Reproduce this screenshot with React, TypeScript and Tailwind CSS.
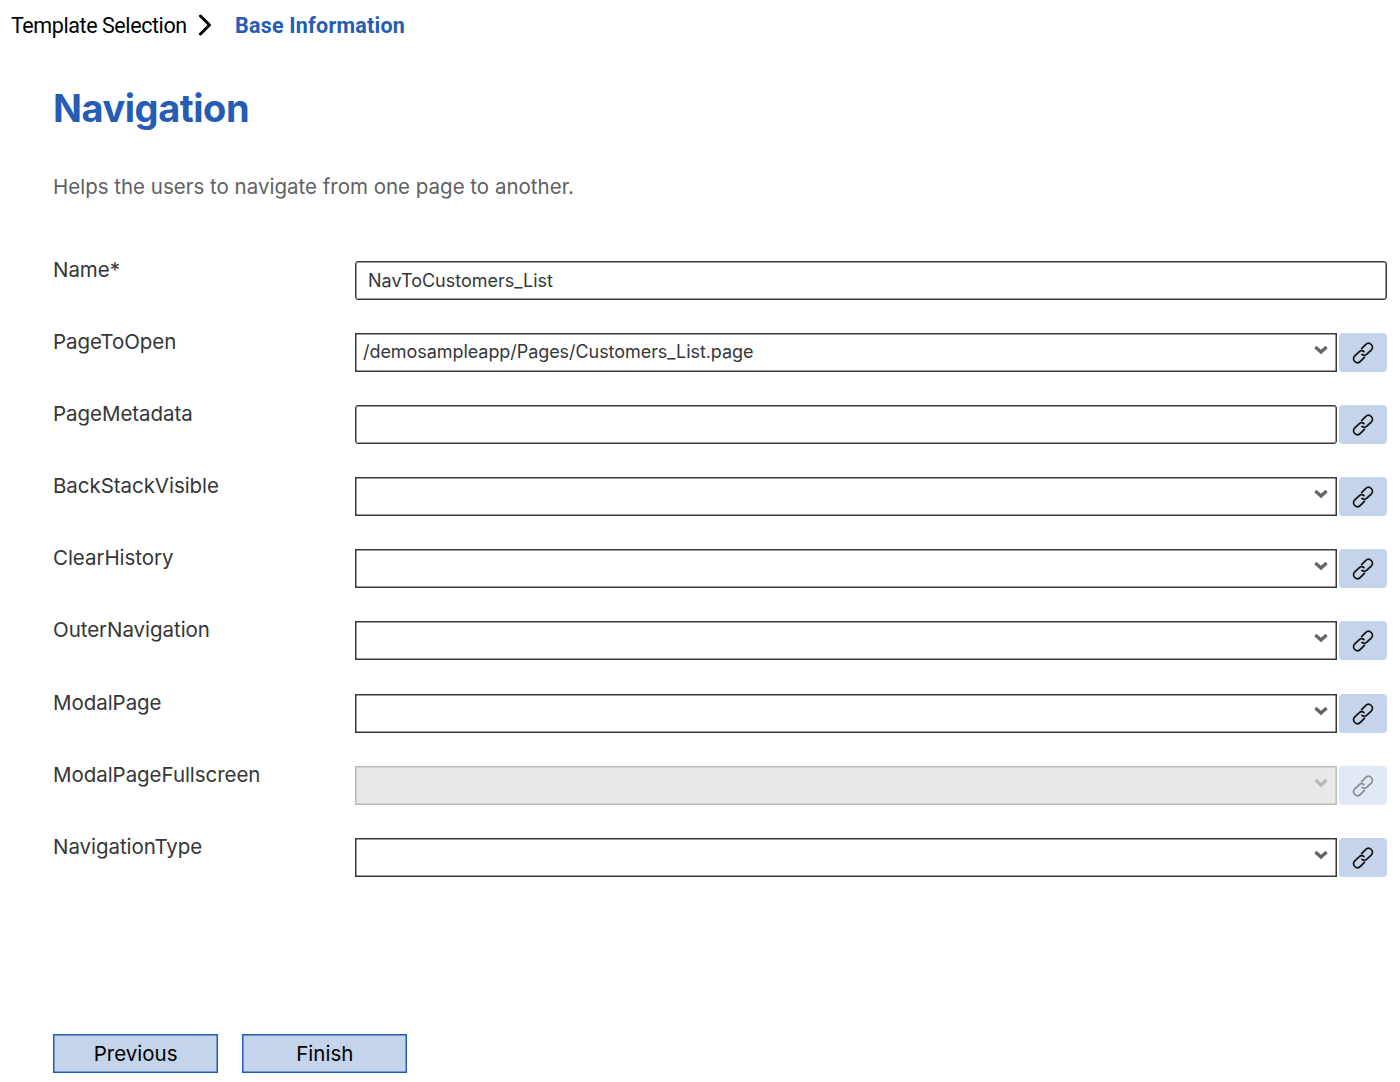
type Kind = 'input' | 'select';

interface Field {
  label: string;
  kind: Kind;
  value?: string;
  link?: boolean;
  disabled?: boolean;
}

const fields: Field[] = [
  { label: 'Name*', kind: 'input', value: 'NavToCustomers_List' },
  { label: 'PageToOpen', kind: 'select', value: '/demosampleapp/Pages/Customers_List.page', link: true },
  { label: 'PageMetadata', kind: 'input', link: true },
  { label: 'BackStackVisible', kind: 'select', link: true },
  { label: 'ClearHistory', kind: 'select', link: true },
  { label: 'OuterNavigation', kind: 'select', link: true },
  { label: 'ModalPage', kind: 'select', link: true },
  { label: 'ModalPageFullscreen', kind: 'select', link: true, disabled: true },
  { label: 'NavigationType', kind: 'select', link: true },
];

function LinkIcon() {
  return (
    <svg width="22" height="22" viewBox="0 0 22 22" fill="none" stroke="currentColor" strokeWidth="1.7" strokeLinecap="round" strokeLinejoin="round">
      <path d="M9.6 6.6 L13.6 2.6 C15.3 0.9 17.6 0.9 19.2 2.5 C20.9 4.1 20.9 6.4 19.2 8.1 L14.9 12.2 C13.4 13.6 11.4 13.6 10 12.4" />
      <path d="M12.4 15.4 L8.4 19.4 C6.7 21.1 4.4 21.1 2.8 19.5 C1.1 17.9 1.1 15.6 2.8 13.9 L7.1 9.8 C8.6 8.4 10.6 8.4 12 9.6" />
    </svg>
  );
}

function Row({ field }: { field: Field }) {
  const colors = field.disabled
    ? 'border-[#bcbcbc] bg-[#e8e8e8] shadow-[inset_0_0_0_0.5px_#bcbcbc]'
    : 'border-[#38393b] bg-white shadow-[inset_0_0_0_0.5px_#38393b]';
  const shape = field.kind === 'input' ? 'rounded-[3px] pl-3' : 'pl-[7px] pr-2 tracking-[-0.06px]';
  return (
    <div className="flex h-[72.2px] items-start">
      <label className="w-[302px] shrink-0 text-[20.5px] leading-[17px] tracking-[-0.05px] text-[#353638]">{field.label}</label>
      <div className={`flex h-[39px] min-w-0 grow items-center justify-between border text-[18px] leading-6 text-[#353638] ${colors} ${shape}`}>
        <span className={field.kind === 'input' ? 'pt-px' : ''}>{field.value}</span>
        {field.kind === 'select' && (
          <svg className={`mb-[5px] ${field.disabled ? 'text-[#b8b8b8]' : 'text-[#636363]'}`} width="14" height="10" viewBox="0 0 14 10" fill="none" stroke="currentColor" strokeWidth="3.2">
            <path d="M1.4 2 L7 7 L12.6 2" />
          </svg>
        )}
      </div>
      {field.link && (
        <button className={`ml-0.5 flex h-[39px] w-12 shrink-0 items-center justify-center rounded-[4px] pt-px ${field.disabled ? 'bg-[#e1e9f5] text-[#8b8d90]' : 'bg-[#c3d4eb] text-[#111]'}`}>
          <LinkIcon />
        </button>
      )}
    </div>
  );
}

export default function App() {
  return (
    <div className="h-[1082px] w-[1400px] overflow-hidden bg-white font-['Inter',sans-serif]">
      <nav className="flex h-[50px] items-center pl-[11px] font-['Roboto',sans-serif] text-[21.5px]">
        <span className="w-[176px] whitespace-nowrap pt-0.5 tracking-[-0.42px] text-black">Template Selection</span>
        <svg className="ml-[11px]" width="14" height="22" viewBox="0 0 14 22" fill="none" stroke="#000" strokeWidth="3" strokeLinecap="round" strokeLinejoin="round">
          <path d="M2.5 2 L11.5 11 L2.5 20" />
        </svg>
        <span className="ml-[23px] pt-0.5 font-bold tracking-[0.22px] text-[#255cb4]">Base Information</span>
      </nav>
      <main className="pl-[53px] pr-[13px]">
        <h1 className="mt-[34px] text-[38px] font-bold leading-[48px] tracking-[-0.46px] text-[#255cb4]">Navigation</h1>
        <p className="mt-[43px] text-[20.5px] leading-6 text-[#606163]">Helps the users to navigate from one page to another.</p>
        <div className="mt-[61.5px]">
          {fields.map((f) => (
            <Row key={f.label} field={f} />
          ))}
        </div>
        <div className="mt-[123.7px] flex gap-6">
          {['Previous', 'Finish'].map((b) => (
            <button key={b} className="h-[39px] w-[165.2px] border border-[#255cb4] bg-[#c3d4eb] pt-px text-[20.5px] text-black shadow-[inset_0_0_0_0.5px_#255cb4]">
              {b}
            </button>
          ))}
        </div>
      </main>
    </div>
  );
}
